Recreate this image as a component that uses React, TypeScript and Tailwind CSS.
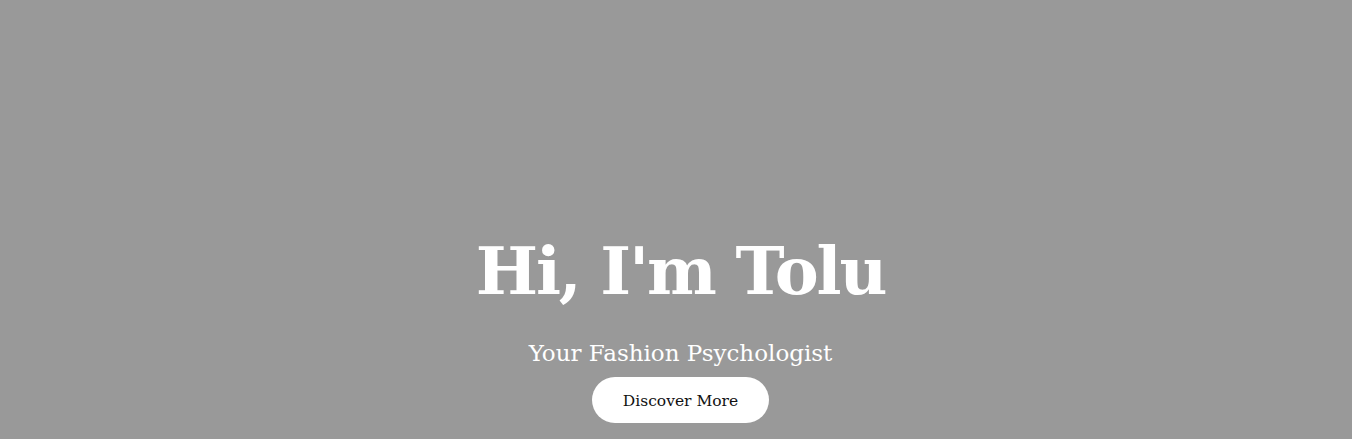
import React from "react";

export default function App() {
  return (
    <div className="h-[439px] w-full bg-[#999999] flex flex-col items-center justify-end pb-[16px] pl-[9px] text-white" style={{ fontFamily: '"DejaVu Serif", serif' }}>
      <h1 className="text-[66px] leading-none font-bold tracking-[-2.2px]">Hi, I'm Tolu</h1>
      <p className="mt-[38px] text-[23px] leading-none">Your Fashion Psychologist</p>
      <button className="mt-[12px] w-[177px] h-[46px] pt-[3px] rounded-full bg-white text-[#111] text-[15.5px]">Discover More</button>
    </div>
  );
}
